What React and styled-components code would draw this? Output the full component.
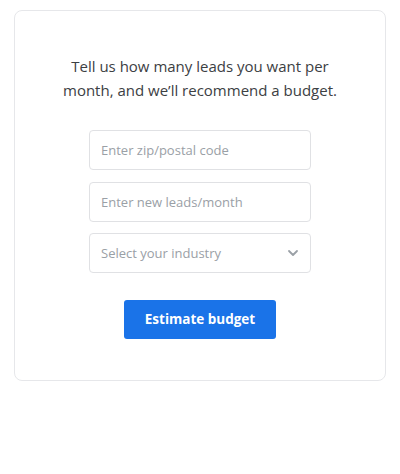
import React from "react";
import styled, { createGlobalStyle } from "styled-components";

const GlobalStyle = createGlobalStyle`
  body {
    margin: 0;
    background: #ffffff;
    font-family: "Open Sans", "Noto Sans", Arial, sans-serif;
  }
`;

const Page = styled.div`
  padding: 10px 14px;
`;

const Card = styled.div`
  box-sizing: border-box;
  width: 372px;
  height: 371px;
  border: 1px solid #e6e7ea;
  border-radius: 8px;
  padding: 43px 0 0;
  display: flex;
  flex-direction: column;
  align-items: center;
`;

const Intro = styled.p`
  margin: 0;
  width: 300px;
  text-align: center;
  font-size: 15px;
  line-height: 24px;
  color: #3c4043;
`;

const Form = styled.form`
  margin-top: 28px;
  display: flex;
  flex-direction: column;
  align-items: center;
  gap: 11.5px;
`;

const Field = styled.div`
  position: relative;
  width: 222px;
  height: 40px;
`;

const Input = styled.input`
  box-sizing: border-box;
  width: 100%;
  height: 100%;
  border: 1px solid #e0e1e4;
  border-radius: 4px;
  padding: 0 11px;
  font-family: inherit;
  font-size: 13px;
  color: #3c4043;
  background: #fff;
  outline: none;
  &::placeholder {
    color: #9aa0a6;
  }
`;

const Select = styled.div`
  box-sizing: border-box;
  width: 100%;
  height: 100%;
  border: 1px solid #e0e1e4;
  border-radius: 4px;
  padding: 0 11px;
  display: flex;
  align-items: center;
  justify-content: space-between;
  font-size: 13px;
  color: #9aa0a6;
`;

const Button = styled.button`
  margin-top: 15px;
  width: 152px;
  height: 39px;
  border: none;
  border-radius: 3px;
  background: #1a73e8;
  color: #ffffff;
  font-family: inherit;
  font-size: 13.5px;
  font-weight: 700;
  cursor: pointer;
`;

function Chevron() {
  return (
    <svg width="12" height="12" viewBox="0 0 12 12" fill="none">
      <path d="M2 4l4 4 4-4" stroke="#9aa0a6" strokeWidth="1.8" strokeLinecap="round" strokeLinejoin="round" />
    </svg>
  );
}

export default function App() {
  return (
    <>
      <GlobalStyle />
      <Page>
        <Card>
          <Intro>Tell us how many leads you want per month, and we’ll recommend a budget.</Intro>
          <Form onSubmit={(e) => e.preventDefault()}>
            <Field>
              <Input placeholder="Enter zip/postal code" />
            </Field>
            <Field>
              <Input placeholder="Enter new leads/month" />
            </Field>
            <Field>
              <Select>
                <span>Select your industry</span>
                <Chevron />
              </Select>
            </Field>
            <Button type="submit">Estimate budget</Button>
          </Form>
        </Card>
      </Page>
    </>
  );
}
